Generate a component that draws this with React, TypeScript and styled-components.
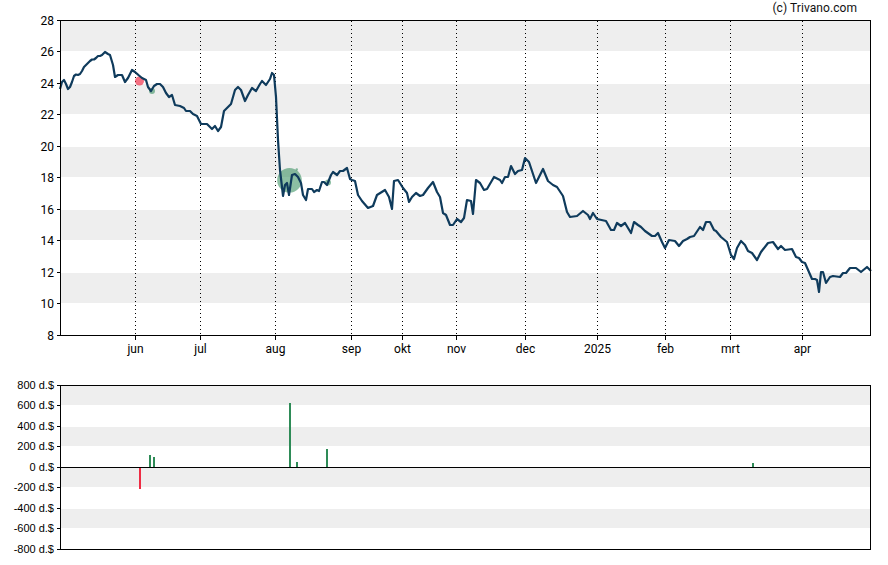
import React from "react";
import styled, { createGlobalStyle } from "styled-components";

const GlobalStyle = createGlobalStyle`
  html, body { margin: 0; padding: 0; background: #ffffff; }
`;

const Page = styled.main`
  width: 888px;
  height: 565px;
  display: flex;
  flex-direction: column;
  overflow: hidden;
  background: #ffffff;
`;

const Credit = styled.header`
  height: 14px;
  flex: none;
  display: flex;
  align-items: flex-start;
  justify-content: flex-end;
  padding: 0 31px 0 0;
  box-sizing: border-box;
  font: 12px/16px Roboto, sans-serif;
  letter-spacing: 0.07px;
  color: #111111;
`;

const ChartSvg = styled.svg<{ $height: number }>`
  display: block;
  flex: none;
  width: 888px;
  height: ${(p) => p.$height}px;
`;

const Band = styled.rect`
  fill: #eeeeee;
`;

const Frame = styled.path`
  fill: none;
  stroke: #000000;
  stroke-width: 1px;
  shape-rendering: crispEdges;
`;

const Axis = styled.path`
  fill: none;
  stroke: #000000;
  stroke-width: 1px;
  shape-rendering: crispEdges;
`;

const Dotted = styled.line`
  stroke: #000000;
  stroke-width: 1px;
  stroke-dasharray: 1 3;
  shape-rendering: crispEdges;
`;

const PriceLine = styled.polyline`
  fill: none;
  stroke: #0f3b5c;
  stroke-width: 2.2px;
  stroke-linejoin: round;
`;

const Marker = styled.circle<{ $tone: "up" | "down" }>`
  fill: ${(p) => (p.$tone === "up" ? "#2e8b57" : "#f0233f")};
  fill-opacity: ${(p) => (p.$tone === "up" ? 0.55 : 0.65)};
`;

const Bar = styled.rect<{ $tone: "up" | "down" }>`
  fill: ${(p) => (p.$tone === "up" ? "#2e8b57" : "#ee2c44")};
`;

const PriceLabel = styled.text`
  font: 12px Roboto, sans-serif;
  fill: #000000;
`;

const VolumeLabel = styled.text`
  font: 11px "Liberation Sans", Arial, sans-serif;
  fill: #000000;
`;

const L = 60.5;
const R = 870.5;

const priceBands: [number, number][] = [
  [21, 51],
  [84, 114],
  [147, 177],
  [210, 240],
  [273, 303],
];
const priceTicks: [string, number][] = [
  ["28", 20.5],
  ["26", 51.5],
  ["24", 83.5],
  ["22", 114.5],
  ["20", 146.5],
  ["18", 177.5],
  ["16", 209.5],
  ["14", 240.5],
  ["12", 272.5],
  ["10", 303.5],
  ["8", 335.5],
];
const months: [string, number][] = [
  ["jun", 135.5],
  ["jul", 200.5],
  ["aug", 275.5],
  ["sep", 351.5],
  ["okt", 402.5],
  ["nov", 456.5],
  ["dec", 525.5],
  ["2025", 597.5],
  ["feb", 665.5],
  ["mrt", 730.5],
  ["apr", 802.5],
];

const pricePoints =
  "60,89 62,82 64,80 66,84 68,89 70,87 72,82 74,76 76,74.5 78,75 80,74 82,71 84,67 86,65 88,63 90,61 92,59.5 94,59.5 96,58 98,56 100,56 102,55 105,52 108,54 110,55 113,65 115,77 118,75 122,75 125,82 128,78 132,70 135,72 139,75.5 142,78 146,80 148,87 151,91 154,86 157,84 160,84 163,87 166,93 169,97 172,95 175,105 180,106 184,108 186,111 190,111 193,114 197,116 199,120 201,124 207,124 210,127 212,129 215,126 218,131 221,127 224,111 228,107 231,104 235,90 238,87 241,90 245,101 248,95 252,88 256,91 260,84 262,81 266,85 270,79 272,73 274,75 276,97 278,140 280,170 282,187 283,196 285,185 287,183 289,195 292,175 295,174 298,177 301,183 303,195 306,200 308,189 312,189 314,192 317,190 319,191 322,182 324,182 327,185 331,175 333,172 337,175 340,171 343,171 347,168 350,179 352,180 355,181 358,195 362,201 368,208 373,206 377,195 385,190 389,197 392,209 394,181 398,180 403,188 407,193 409,202 412,197 416,193 420,196 423,195 428,188 433,182 437,192 440,197 443,213 446,215 450,225 453,225 457,219 461,222 464,218 467,200 471,201 473,214 476,180 480,183 484,190 487,189 494,177 500,180 502,183 505,177 508,177 511,166 515,174 518,171 522,170 525,158 529,162 536,183 543,169 548,181 553,185 557,187 563,196 567,212 570,217 577,216 583,211 588,215 590,219 593,213 597,219 606,221 611,230 614,230 617,223 621,226 625,223 631,233 634,222 638,225 641,227 645,231 652,236 655,236 658,233 662,242 665,248 669,240 675,241 679,246 683,241 687,239 690,237 694,236 700,227 703,230 706,222 710,222 714,230 716,231 721,237 727,242 731,255 734,259 737,248 741,241 745,245 748,251 752,253 757,260 761,252 768,243 773,242 778,249 781,246 785,250 792,249 796,257 799,258 802,262 805,263 812,279 815,279 817,280 819,292 821,272 823,272 826,283 830,277 833,276 840,277 843,273 846,273 850,268 856,268 861,272 867,267 871,271";

const markers: { x: number; y: number; r: number; tone: "up" | "down" }[] = [
  { x: 139.5, y: 81, r: 4.5, tone: "down" },
  { x: 152, y: 91, r: 3, tone: "up" },
  { x: 289.5, y: 180.3, r: 12.3, tone: "up" },
  { x: 296.8, y: 169.5, r: 1.2, tone: "up" },
  { x: 328, y: 182.5, r: 3, tone: "up" },
];

const volumeBands: [number, number][] = [
  [386, 405],
  [427, 446],
  [468, 487],
  [509, 528],
];
const volumeTicks: [string, number][] = [
  ["800 d.$", 385.5],
  ["600 d.$", 405.5],
  ["400 d.$", 426.5],
  ["200 d.$", 446.5],
  ["0 d.$", 467.5],
  ["-200 d.$", 487.5],
  ["-400 d.$", 508.5],
  ["-600 d.$", 528.5],
  ["-800 d.$", 549.5],
];
const bars: { x: number; top: number; bottom: number; tone: "up" | "down" }[] = [
  { x: 139, top: 468, bottom: 489, tone: "down" },
  { x: 149, top: 455, bottom: 467, tone: "up" },
  { x: 153, top: 457, bottom: 467, tone: "up" },
  { x: 289, top: 403, bottom: 467, tone: "up" },
  { x: 296, top: 462, bottom: 467, tone: "up" },
  { x: 326, top: 449, bottom: 467, tone: "up" },
  { x: 752, top: 463, bottom: 467, tone: "up" },
];

function PriceChart() {
  return (
    <ChartSvg $height={361} viewBox="0 14 888 361">
      {priceBands.map(([a, b]) => (
        <Band key={a} x={L} y={a} width={R - L} height={b - a} />
      ))}
      {months.map(([m, x]) => (
        <Dotted key={m} x1={x} x2={x} y1={21} y2={335} />
      ))}
      {markers.map((m) => (
        <Marker key={m.x} cx={m.x} cy={m.y} r={m.r} $tone={m.tone} />
      ))}
      <PriceLine points={pricePoints} />
      <Frame d={`M${L} 20.5H${R}V335.5H${L}Z`} />
      <Axis d={priceTicks.map(([, y]) => `M56.5 ${y}H${L}`).join("")} />
      <Axis d={months.map(([, x]) => `M${x} 335.5V340`).join("")} />
      {priceTicks.map(([t, y]) => (
        <PriceLabel key={t} x={54} y={y + 4.5} textAnchor="end">
          {t}
        </PriceLabel>
      ))}
      {months.map(([m, x]) => (
        <PriceLabel key={m} x={x} y={353} textAnchor="middle">
          {m}
        </PriceLabel>
      ))}
    </ChartSvg>
  );
}

function VolumeChart() {
  return (
    <ChartSvg $height={190} viewBox="0 375 888 190">
      {volumeBands.map(([a, b]) => (
        <Band key={a} x={L} y={a} width={R - L} height={b - a} />
      ))}
      {bars.map((b) => (
        <Bar key={b.x} x={b.x} y={b.top} width={2} height={b.bottom - b.top} $tone={b.tone} />
      ))}
      <Frame d={`M${L} 385.5H${R}V549.5H${L}Z`} />
      <Axis d={`M${L} 467.5H${R}`} />
      <Axis d={volumeTicks.map(([, y]) => `M56.5 ${y}H${L}`).join("")} />
      {volumeTicks.map(([t, y]) => (
        <VolumeLabel key={t} x={54} y={y + 3.5} textAnchor="end">
          {t}
        </VolumeLabel>
      ))}
    </ChartSvg>
  );
}

export default function App() {
  return (
    <Page>
      <GlobalStyle />
      <Credit>(c) Trivano.com</Credit>
      <PriceChart />
      <VolumeChart />
    </Page>
  );
}
